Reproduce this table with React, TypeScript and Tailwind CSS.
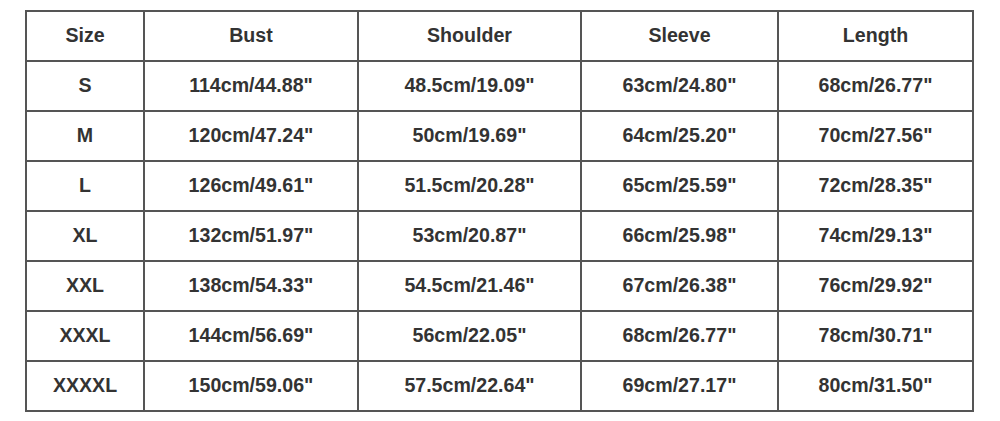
const headers = ["Size", "Bust", "Shoulder", "Sleeve", "Length"];

const rows = [
  ["S", "114cm/44.88\"", "48.5cm/19.09\"", "63cm/24.80\"", "68cm/26.77\""],
  ["M", "120cm/47.24\"", "50cm/19.69\"", "64cm/25.20\"", "70cm/27.56\""],
  ["L", "126cm/49.61\"", "51.5cm/20.28\"", "65cm/25.59\"", "72cm/28.35\""],
  ["XL", "132cm/51.97\"", "53cm/20.87\"", "66cm/25.98\"", "74cm/29.13\""],
  ["XXL", "138cm/54.33\"", "54.5cm/21.46\"", "67cm/26.38\"", "76cm/29.92\""],
  ["XXXL", "144cm/56.69\"", "56cm/22.05\"", "68cm/26.77\"", "78cm/30.71\""],
  ["XXXXL", "150cm/59.06\"", "57.5cm/22.64\"", "69cm/27.17\"", "80cm/31.50\""],
];

const widths = ["w-[118px]", "w-[214px]", "w-[223px]", "w-[197px]", "w-[195px]"];

export default function App() {
  return (
    <div className="w-[1000px] h-[421px] bg-white pt-[10px] pl-[25px] font-['Liberation_Sans',Arial,sans-serif]">
      <table className="table-fixed border-collapse border-2 border-[#555] text-[#333] font-bold text-[19.6px]">
        <colgroup>
          {widths.map((w, i) => (
            <col key={i} className={w} />
          ))}
        </colgroup>
        <thead>
          <tr className="h-[50px]">
            {headers.map((h) => (
              <th key={h} className="border-2 border-[#555] text-center font-bold pb-px">
                {h}
              </th>
            ))}
          </tr>
        </thead>
        <tbody>
          {rows.map((row) => (
            <tr key={row[0]} className="h-[50px]">
              {row.map((cell, i) => (
                <td key={i} className="border-2 border-[#555] text-center pb-px">
                  {cell}
                </td>
              ))}
            </tr>
          ))}
        </tbody>
      </table>
    </div>
  );
}
